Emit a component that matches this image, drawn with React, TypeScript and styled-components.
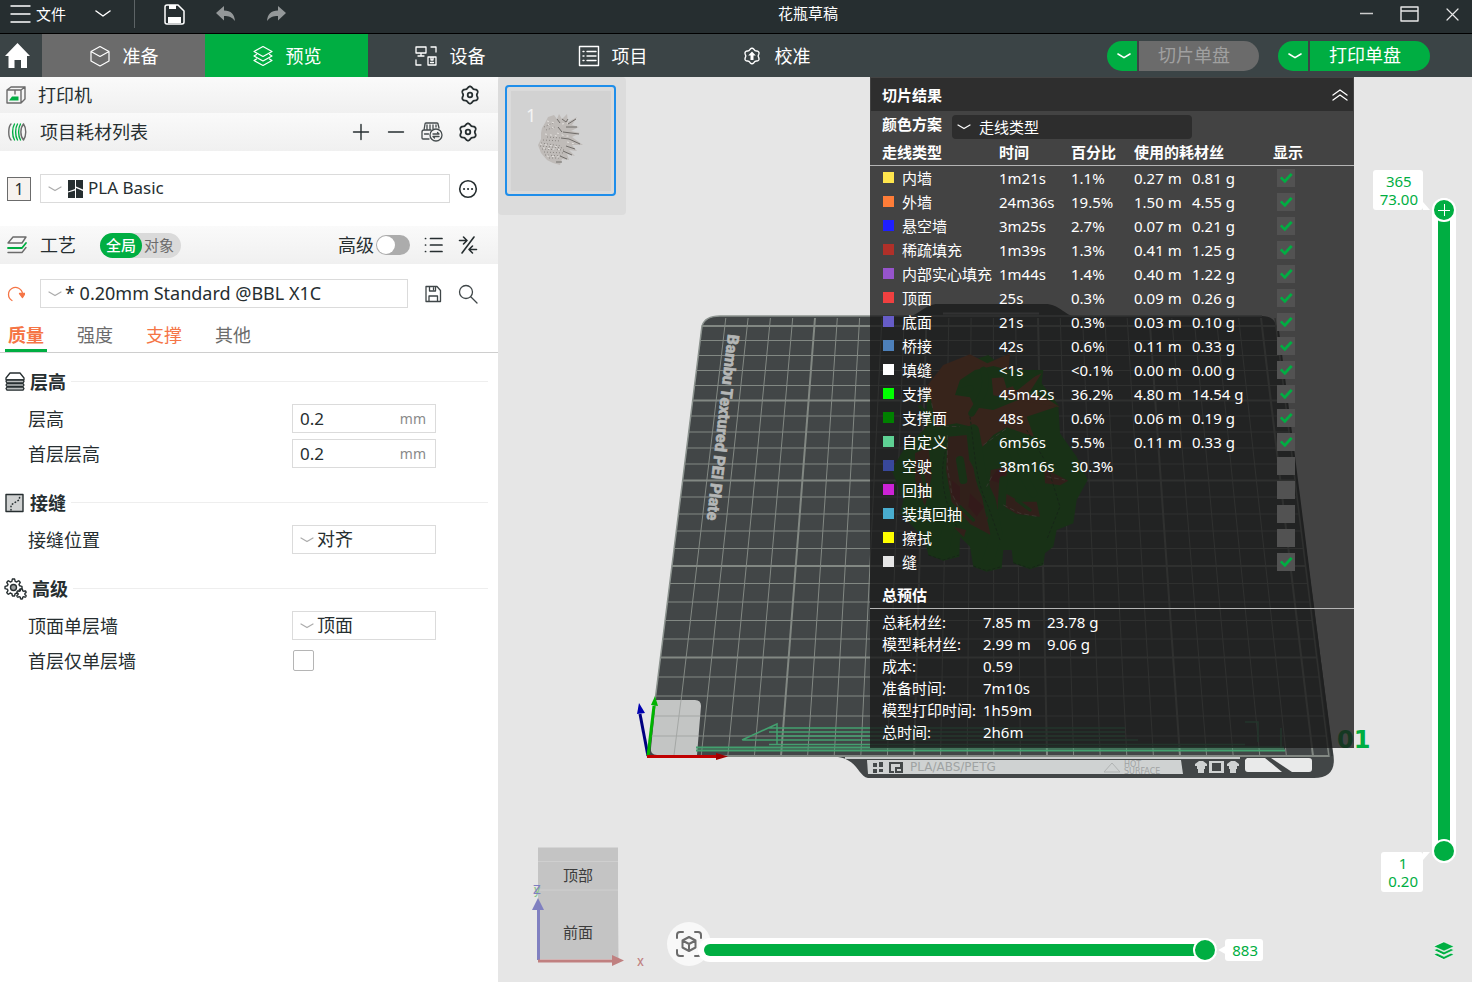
import React, { useState } from 'react';
import styled, { createGlobalStyle, css } from 'styled-components';

const green = '#00ae42';
const ink = '#262e30';

const GlobalStyle = createGlobalStyle`
  *, *::before, *::after { box-sizing: border-box; }
  body { margin: 0; background: #e6e6e6; }
  body, button, input, select {
    font-family: "Noto Sans", "Noto Sans CJK SC", sans-serif;
    color: ${ink};
  }
  button { border: 0; padding: 0; background: none; cursor: pointer; }
  svg { display: block; flex: none; }
  h2, h3 { margin: 0; }
`;

const Page = styled.div`
  display: flex;
  flex-direction: column;
  min-height: 100vh;
`;

/* ---------- title bar ---------- */

const TitleBar = styled.header`
  display: flex;
  align-items: flex-start;
  height: 34px;
  background: ${ink};
  border-bottom: 1px solid #000;
  color: #fff;
`;

const MenuGroup = styled.div`
  display: flex;
  align-items: center;
  width: 288px;
  height: 28px;
  padding-left: 10px;
`;

const FileButton = styled.button`
  display: flex;
  align-items: center;
  gap: 5px;
  color: #fff;
  font-size: 15px;
  line-height: 20px;
`;

const BarButton = styled.button<{ $left: number }>`
  margin-left: ${(p) => p.$left}px;
`;

const BarDivider = styled.span`
  width: 1px;
  height: 28px;
  margin-left: 23px;
  background: #5d6466;
`;

const DocTitle = styled.div`
  flex: 1;
  text-align: center;
  font-size: 15px;
  line-height: 26px;
`;

const WindowGroup = styled.div`
  display: flex;
  align-items: center;
  justify-content: flex-end;
  gap: 27px;
  width: 144px;
  height: 28px;
  padding-right: 13px;
`;

/* ---------- tab bar ---------- */

const TabBar = styled.nav`
  display: flex;
  align-items: center;
  height: 43px;
  background: #3b4446;
`;

const HomeButton = styled.button`
  width: 42px;
  padding-left: 5px;
`;

const MainTab = styled.button<{ $bg?: string }>`
  display: flex;
  align-items: center;
  justify-content: center;
  gap: 12px;
  width: 163px;
  height: 43px;
  background: ${(p) => p.$bg ?? 'transparent'};
  color: #fff;
  font-size: 18px;
  line-height: 24px;
`;

const Actions = styled.div`
  display: flex;
  gap: 19px;
  margin-left: auto;
  padding-right: 42px;
`;

const SplitButton = styled.div`
  display: flex;
  gap: 2px;
`;

const SplitArrow = styled.button`
  display: flex;
  align-items: center;
  justify-content: center;
  width: 30px;
  height: 30px;
  padding-left: 4px;
  border-radius: 15px 0 0 15px;
  background: ${green};
`;

const SplitMain = styled.button<{ $muted?: boolean }>`
  width: 120px;
  height: 30px;
  padding: 0 10px 2px 0;
  border-radius: 0 15px 15px 0;
  background: ${(p) => (p.$muted ? '#6b6b6b' : green)};
  color: ${(p) => (p.$muted ? '#a0a0a0' : '#fff')};
  font-size: 18px;
  line-height: 28px;
`;

/* ---------- side panel ---------- */

const Workspace = styled.div`
  display: flex;
  flex: 1;
`;

const Sidebar = styled.aside`
  flex: none;
  width: 498px;
  background: #fff;
`;

const Band = styled.div<{ $h: number; $right?: number; $gap?: number }>`
  display: flex;
  align-items: center;
  gap: ${(p) => p.$gap ?? 15}px;
  height: ${(p) => p.$h}px;
  padding: 0 ${(p) => p.$right ?? 20}px 0 6px;
  background: linear-gradient(#fafafa, #f0f0f0);
`;

const BandTitle = styled.h2`
  display: flex;
  align-items: center;
  gap: 12px;
  margin-right: auto;
  font-size: 18px;
  font-weight: 400;
  line-height: 24px;
`;

const ScopeSwitch = styled.div`
  display: flex;
  align-items: center;
  height: 25px;
  margin-left: 12px;
  padding-right: 5px;
  border-radius: 13px;
  background: #dadada;
`;

const ScopeOption = styled.button<{ $on?: boolean }>`
  height: 25px;
  padding: 0 ${(p) => (p.$on ? 6 : 2)}px;
  border-radius: 13px;
  font-size: 15px;
  line-height: 22px;
  ${(p) =>
    p.$on
      ? css`
          background: ${green};
          color: #fff;
          font-weight: 500;
        `
      : css`
          color: #6b6b6b;
        `}
`;

const SwitchLabel = styled.label`
  display: flex;
  align-items: center;
  gap: 2px;
  font-size: 18px;
  line-height: 24px;
`;

const Toggle = styled.input`
  appearance: none;
  width: 34px;
  height: 20px;
  margin: 0;
  border-radius: 10px;
  background: #acacac;
  &::after {
    content: '';
    display: block;
    width: 18px;
    height: 18px;
    margin: 1px;
    border-radius: 50%;
    background: #fff;
  }
  &:checked { background: ${green}; }
  &:checked::after { margin-left: 15px; }
`;

const PresetRow = styled.div<{ $pad: string; $gap: number }>`
  display: flex;
  align-items: center;
  gap: ${(p) => p.$gap}px;
  padding: ${(p) => p.$pad};
`;

const SlotButton = styled.button`
  width: 24px;
  height: 24px;
  margin-right: 1px;
  border: 1px solid #6b6b6b;
  background: #f6f2ef;
  font-size: 16px;
  line-height: 20px;
`;

const SelectBox = styled.div<{ $w?: number }>`
  display: flex;
  align-items: center;
  ${(p) => (p.$w ? `width: ${p.$w}px;` : 'flex: 1;')}
  height: 29px;
  padding-left: 7px;
  border: 1px solid #dbdbdb;
  background: #fff;
`;

const Select = styled.select<{ $size: number }>`
  appearance: none;
  flex: 1;
  min-width: 0;
  height: 27px;
  padding: 0 3px 2px;
  border: 0;
  background: none;
  font-size: ${(p) => p.$size}px;
`;

const Tabs = styled.div`
  display: flex;
  gap: 27px;
  padding: 12px 0 0 5px;
  border-bottom: 1px solid #cecece;
`;

const Tab = styled.button<{ $on?: boolean; $changed?: boolean }>`
  width: 42px;
  height: 32px;
  padding-top: 2px;
  border-bottom: 3px solid ${(p) => (p.$on ? green : 'transparent')};
  color: ${(p) => (p.$changed ? '#f57546' : '#6b6b6b')};
  font-size: 18px;
  font-weight: ${(p) => (p.$on ? 700 : 400)};
  line-height: 27px;
`;

const Settings = styled.div`
  display: flex;
  flex-direction: column;
  gap: 12px;
  padding: 9px 10px 0 4px;
`;

const GroupTitle = styled.h3`
  display: flex;
  align-items: center;
  gap: 5px;
  height: 39px;
  font-size: 18px;
  line-height: 24px;
  &::after {
    content: '';
    flex: 1;
    height: 1px;
    background: #eee;
  }
`;

const Field = styled.div`
  display: flex;
  align-items: center;
  height: 35px;
  padding-left: 24px;
`;

const FieldLabel = styled.label`
  width: 264px;
  font-size: 18px;
  line-height: 24px;
`;

const NumberBox = styled.div`
  display: flex;
  align-items: center;
  width: 144px;
  height: 29px;
  padding: 0 9px 0 7px;
  border: 1px solid #dbdbdb;
`;

const NumberInput = styled.input`
  flex: 1;
  min-width: 0;
  padding: 0 0 1px;
  border: 0;
  background: none;
  font-size: 17px;
  outline: none;
`;

const Unit = styled.span`
  color: #8a8a8a;
  font-size: 14px;
  line-height: 28px;
`;

const Tick = styled.input`
  appearance: none;
  width: 21px;
  height: 21px;
  margin: 0 0 0 1px;
  border: 1px solid #b5b5b5;
  border-radius: 2px;
  background: #fff;
  &:checked { background: ${green}; }
`;

/* ---------- viewport ---------- */

const Viewport = styled.main`
  position: relative;
  display: grid;
  grid-template-columns: 1fr 484px 118px;
  grid-template-rows: 1fr auto;
  flex: 1;
  background: #e6e6e6;
`;

const SceneLayer = styled.svg`
  position: absolute;
  inset: 0;
  width: 100%;
  height: 100%;
`;

const PlateStrip = styled.div`
  position: relative;
  justify-self: start;
  align-self: start;
  width: 128px;
  height: 138px;
  padding: 8px 7px;
  border-radius: 4px;
  background: #dcdcdc;
`;

const PlateCard = styled.button`
  display: flex;
  align-items: flex-start;
  width: 111px;
  height: 111px;
  padding: 4px 3px 3px 4px;
  border: 2px solid #1f8eea;
  border-radius: 4px;
  background: #dadada;
`;

const PlateImage = styled.svg`
  background: #d2d2d2;
`;

const Results = styled.section`
  position: relative;
  align-self: start;
  padding: 1px 0 5px;
  background: rgba(26, 26, 26, 0.8);
  color: #fff;
  font-size: 15px;
  line-height: 22px;
`;

const ResultsHead = styled.div`
  display: flex;
  align-items: center;
  justify-content: space-between;
  height: 33px;
  margin: 0 1px;
  padding: 0 4px 0 11px;
  background: #2e2e2e;
`;

const ResultsTitle = styled.h2`
  font-size: 15px;
  line-height: 22px;
`;

const SchemeRow = styled.div`
  display: flex;
  align-items: flex-start;
  gap: 10px;
  padding: 4px 0 0 12px;
`;

const SchemeLabel = styled.label`
  font-weight: 700;
  line-height: 18px;
`;

const SchemeBox = styled.div`
  display: flex;
  align-items: center;
  width: 240px;
  height: 24px;
  padding-left: 5px;
  border-radius: 4px;
  background: #2d2d2d;
`;

const SchemeSelect = styled.select`
  appearance: none;
  flex: 1;
  height: 24px;
  padding: 0 8px;
  border: 0;
  background: none;
  color: #fff;
  font-size: 15px;
`;

const LineTable = styled.table`
  width: 100%;
  table-layout: fixed;
  border-spacing: 0;
  th {
    height: 27px;
    padding: 0;
    border-bottom: 1px solid #b4b4b4;
    text-align: left;
    line-height: 26px;
  }
  td {
    height: 24px;
    padding: 0;
    line-height: 24px;
    white-space: nowrap;
  }
  th:first-child, td:first-child { padding-left: 12px; }
`;

const Swatch = styled.span<{ $c: string }>`
  width: 11px;
  height: 11px;
  margin: 0 8px 2px 1px;
  background: ${(p) => p.$c};
`;

const LineName = styled.span`
  display: flex;
  align-items: center;
`;

const ShowTick = styled.input`
  appearance: none;
  display: grid;
  place-items: center;
  width: 18px;
  height: 18px;
  margin: 0 0 0 4px;
  background: #525252;
  &:checked::after {
    content: '';
    width: 14px;
    height: 12px;
    background: ${green};
    clip-path: polygon(6% 52%, 20% 38%, 40% 62%, 82% 8%, 98% 22%, 42% 94%);
  }
`;

const TotalsTitle = styled.h3`
  padding: 9px 0 1px 12px;
  border-bottom: 1px solid #b4b4b4;
  font-size: 15px;
  line-height: 24px;
`;

const Totals = styled.dl`
  display: grid;
  grid-template-columns: 101px 64px 1fr;
  margin: 0;
  padding: 2px 0 0 12px;
  line-height: 22px;
  white-space: nowrap;
  dt { grid-column: 1; }
  dd { margin: 0; }
`;

/* ---------- sliders ---------- */

const Rail = styled.div`
  position: relative;
  display: flex;
  flex-direction: column;
  align-items: flex-end;
  grid-column: 3;
  grid-row: 1 / 3;
  padding: 93px 16px 21px 0;
`;

const RailBody = styled.div`
  display: flex;
  flex: 1;
  gap: 9px;
`;

const RailLabels = styled.div`
  display: flex;
  flex-direction: column;
  justify-content: space-between;
  align-items: flex-end;
`;

const Bubble = styled.output<{ $tail: string }>`
  position: relative;
  padding: 2px 5px 2px 7px;
  border-radius: 3px;
  background: #fff;
  color: ${green};
  font-size: 15px;
  line-height: 18px;
  text-align: center;
  &::after {
    content: '';
    position: absolute;
    width: 7px;
    height: 8px;
    background: #fff;
    ${(p) =>
      p.$tail === 'top' && 'left: 100%; top: 0; clip-path: polygon(0 0, 100% 0, 0 100%);'}
    ${(p) =>
      p.$tail === 'bottom' && 'left: 100%; bottom: 0; clip-path: polygon(0 0, 100% 100%, 0 100%);'}
    ${(p) =>
      p.$tail === 'left' && 'right: 100%; top: 7px; clip-path: polygon(0 50%, 100% 0, 100% 100%);'}
  }
`;

const VerticalPill = styled.div`
  display: grid;
  width: 24px;
  margin: 28px 0 29px;
  border-radius: 12px;
  background: #fff;
`;

const VerticalFill = styled.span`
  grid-area: 1 / 1;
  width: 12px;
  margin: 12px 6px;
  background: ${green};
`;

const thumb = css`
  appearance: none;
  width: 24px;
  height: 24px;
  border: 2px solid #fff;
  border-radius: 50%;
  background-color: ${green};
`;

const VerticalRange = styled.input<{ $plus?: boolean }>`
  grid-area: 1 / 1;
  appearance: none;
  writing-mode: vertical-lr;
  direction: rtl;
  width: 24px;
  height: 100%;
  margin: 0;
  background: none;
  pointer-events: none;
  &::-webkit-slider-thumb {
    ${thumb}
    pointer-events: auto;
    ${(p) =>
      p.$plus &&
      css`
        background-image: linear-gradient(#fff, #fff), linear-gradient(#fff, #fff);
        background-size: 12px 1px, 1px 12px;
        background-position: center;
        background-repeat: no-repeat;
      `}
  }
`;

const LayersButton = styled.button`
  margin: 49px 2px 0 0;
`;

const BottomBar = styled.div`
  position: relative;
  display: flex;
  align-items: flex-start;
  grid-column: 1 / 3;
  grid-row: 2;
  height: 135px;
  padding: 0 91px 0 32px;
`;

const FitButton = styled.button`
  display: grid;
  place-items: center;
  flex: none;
  width: 44px;
  height: 44px;
  margin: 75px 0 0 17px;
  border-radius: 50%;
  background: #f8f8f8;
`;

const HorizontalPill = styled.div`
  position: relative;
  flex: 1;
  height: 24px;
  margin: 91px 8px 0 -13px;
  padding-left: 6px;
  border-radius: 12px;
  background: #fff;
`;

const HorizontalRange = styled.input`
  appearance: none;
  display: block;
  width: 100%;
  height: 24px;
  margin: 0;
  background: none;
  &::-webkit-slider-runnable-track {
    height: 12px;
    border-radius: 6px;
    background: ${green};
  }
  &::-webkit-slider-thumb {
    ${thumb}
    margin-top: -6px;
  }
`;

const MoveBubble = styled.div`
  display: flex;
  margin-top: 92px;
`;

/* ---------- icons ---------- */

const wave = (cx: number, cy: number, r: number, amp: number, lobes: number, square = 1) => {
  const pts: string[] = [];
  for (let i = 0; i < 96; i++) {
    const t = (i / 96) * Math.PI * 2 - Math.PI / 2;
    const w = Math.max(-1, Math.min(1, Math.cos(lobes * (t + Math.PI / 2)) * square));
    const rr = r + amp * w;
    pts.push(`${(cx + rr * Math.cos(t)).toFixed(2)} ${(cy + rr * Math.sin(t)).toFixed(2)}`);
  }
  return `M${pts.join('L')}Z`;
};

type IconProps = { w?: number; h?: number; box?: string; color?: string; sw?: number; children: React.ReactNode };
const Icon = ({ w = 20, h, box, color = ink, sw = 1.4, children }: IconProps) => (
  <svg
    width={w}
    height={h ?? w}
    viewBox={box ?? `0 0 ${w} ${h ?? w}`}
    fill="none"
    stroke={color}
    strokeWidth={sw}
    strokeLinecap="round"
    strokeLinejoin="round"
    aria-hidden="true"
  >
    {children}
  </svg>
);

const Chevron = ({ color = '#acacac', sw = 1.2 }: { color?: string; sw?: number }) => (
  <Icon w={14} h={8} color={color} sw={sw}>
    <path d="M1 2l6 3.6L13 2" />
  </Icon>
);

const Gear = () => (
  <Icon sw={1.8}>
    <path d={wave(10, 10, 7.7, 0.9, 6)} />
    <circle cx="10" cy="10" r="2.3" />
  </Icon>
);

/* ---------- data ---------- */

const lines: [string, string, string, string, string, string, boolean][] = [
  ['#ffe64d', '内墙', '1m21s', '1.1%', '0.27 m', '0.81 g', true],
  ['#ff7d38', '外墙', '24m36s', '19.5%', '1.50 m', '4.55 g', true],
  ['#1f1fff', '悬空墙', '3m25s', '2.7%', '0.07 m', '0.21 g', true],
  ['#b03029', '稀疏填充', '1m39s', '1.3%', '0.41 m', '1.25 g', true],
  ['#9654cc', '内部实心填充', '1m44s', '1.4%', '0.40 m', '1.22 g', true],
  ['#f04040', '顶面', '25s', '0.3%', '0.09 m', '0.26 g', true],
  ['#665cc7', '底面', '21s', '0.3%', '0.03 m', '0.10 g', true],
  ['#4d80ba', '桥接', '42s', '0.6%', '0.11 m', '0.33 g', true],
  ['#ffffff', '填缝', '<1s', '<0.1%', '0.00 m', '0.00 g', true],
  ['#00ff00', '支撑', '45m42s', '36.2%', '4.80 m', '14.54 g', true],
  ['#008000', '支撑面', '48s', '0.6%', '0.06 m', '0.19 g', true],
  ['#5ed194', '自定义', '6m56s', '5.5%', '0.11 m', '0.33 g', true],
  ['#38489b', '空驶', '38m16s', '30.3%', '', '', false],
  ['#cd22d6', '回抽', '', '', '', '', false],
  ['#49adcf', '装填回抽', '', '', '', '', false],
  ['#ffff00', '擦拭', '', '', '', '', false],
  ['#e6e6e6', '缝', '', '', '', '', true],
];

const totals = [
  ['总耗材丝:', '7.85 m', '23.78 g'],
  ['模型耗材丝:', '2.99 m', '9.06 g'],
  ['成本:', '0.59', ''],
  ['准备时间:', '7m10s', ''],
  ['模型打印时间:', '1h59m', ''],
  ['总时间:', '2h6m', ''],
];

/* ---------- scene ---------- */

const rowYs = [
  756, 736, 716, 696, 677, 657.5, 639, 620.5, 602, 583.5, 566, 548.5, 531, 514, 497, 480.5, 464, 448, 432, 416,
  400.5, 385.5, 370.5, 355.5, 340.5, 326,
];
const leftAt = (y: number) => 648 + ((756 - y) / 439) * 55;
const rightAt = (y: number) => 1329 - ((756 - y) / 439) * 55;

const HedgehogModel = () => (
  <g transform="translate(860 320) scale(.3333)">
    <path
      fill="#0f8c08"
      d="M200 210L250 150L310 130L385 105L440 150L550 150L545 190L595 255L600 340L650 410L683 480L650 540L640 610L590 630L580 680L555 700L550 735L510 748L460 730L455 690L430 690L425 745L380 755L340 740L330 680L300 650L298 710L250 722L205 705L195 660L150 610L120 580L130 540L95 450L130 390L200 320Z"
    />
    <path
      fill="#a84a20"
      d="M250 135L330 103L382 130L450 100L446 150L400 138L345 150L300 180L285 225L330 232L345 262L400 270L480 238L590 260L500 290L522 350L440 322L400 345L368 380L335 320L290 310L228 320L213 240L196 205Z"
    />
    <path fill="#a84a20" d="M545 160L505 222L555 232L600 262L470 240L400 226L395 175L430 172L440 205L470 195Z" />
    <path
      fill="#8c381c"
      d="M165 400L205 380L215 470L195 560L165 480ZM265 350L320 345L328 420L355 470L372 560L392 645L330 612L275 545L258 450ZM392 450L445 440L428 515L480 545L530 545L540 590L470 582L425 555L380 600L388 500ZM552 445L625 482L600 496L555 490ZM280 620L318 630L312 652Z"
    />
    <path fill="#981c1c" d="M410 450L440 455L420 490L390 480ZM330 520L372 560L350 590L325 560ZM275 480L300 500L300 550L278 530Z" />
    <g fill="none" stroke="#0f8c08" strokeLinecap="round">
      <path strokeWidth="34" d="M240 360C220 440 240 520 270 600L250 690M340 330C360 420 350 470 390 540L410 640L385 720" />
      <path strokeWidth="20" d="M370 150C390 200 360 240 335 280M520 160L470 200M300 215L330 205" />
      <path strokeWidth="24" d="M450 370L480 450L520 520M300 420L310 480M430 480L425 560" />
      <path strokeWidth="10" d="M470 540L510 570M300 560L340 600M180 430L200 520M180 260L220 300" />
    </g>
    <g fill="none" stroke="#085206" strokeWidth="3" strokeDasharray="9 6">
      <path d="M330 290C345 400 345 480 385 560L420 660M260 380C235 460 250 540 290 620M500 330L560 430L600 560L560 660" />
      <path d="M205 705L250 720L298 705M340 738L380 752L425 740M460 728L510 745L550 730" />
    </g>
    <g fill="none" stroke="#d9b8a6" strokeWidth="2" strokeDasharray="14 9">
      <path d="M262 345L262 440L275 520L300 570M430 555L480 580L535 590M395 470L380 500M560 470L615 480" />
      <path d="M215 250L230 318L300 320M370 375L440 325" />
    </g>
  </g>
);

const Scene = () => (
  <SceneLayer viewBox="498 77 974 905" preserveAspectRatio="xMidYMid meet" role="img" aria-label="打印板">
    <path d="M905 318C922 314 924 304 938 304H1045C1060 304 1062 314 1078 318Z" fill="#424647" />
    <path d="M943 313.500H1039" stroke="#8f9394" strokeWidth="2" />
    <path
      d="M648 757L702 326Q705 316 720 316H1262Q1275 316 1277 328L1333 752Q1338 778 1314 778H868C858 776 858 760 838 757Z"
      fill="#424647"
    />
    <path d="M1278 330L1332 756" stroke="#35393a" strokeWidth="2" />
    <path d="M648 757L702 326Q705 316 720 316H1262" fill="none" stroke="#8c938f" strokeWidth="1.5" />
    <g fill="none" stroke="#828883">
      {Array.from({ length: 25 }, (_, k) => k + 1).map((i) => (
        <path
          key={i}
          strokeWidth={i % 5 ? 1 : 2}
          d={`M${(648 + 26.6 * i).toFixed(1)} 756L${(703.5 + 22.3 * i).toFixed(1)} 318`}
        />
      ))}
      {rowYs.map((y, i) => (
        <path key={y} strokeWidth={i % 5 ? 1.2 : 2} d={`M${leftAt(y).toFixed(1)} ${y}H${rightAt(y).toFixed(1)}`} />
      ))}
      <path strokeWidth="1.500" d="M1329 757L1275 318" />
    </g>
    <path d="M656 700H695Q701 700 701 706L697 755H657Q650 755 651 748Z" fill="#c3c5c4" />
    <path d="M681 700L674 755M653 716H700M651 736H698" stroke="#a4a7a5" fill="none" />
    <text
      transform="translate(728 334) rotate(96.500)"
      fontFamily="Roboto, sans-serif"
      fontWeight="700"
      fontSize="16"
      fill="#b4b6b6"
      stroke="#b4b6b6"
      strokeWidth=".7"
    >
      Bambu Textured PEI Plate
    </text>
    <HedgehogModel />
    <g stroke="#43a06f" fill="none" strokeWidth="1.500">
      <path d="M769 728H1125M769 732H1125M776 736H1125M743 740H1138M769 744.500H1245M742 740L777 724V745M1245 722h13v20M1281 728v20" />
      <path strokeWidth="2" d="M696 747.500H1284M696 750.500H1285" />
    </g>
    <path d="M845 758H1240" stroke="#c9cccc" strokeWidth="2" />
    <path d="M867 760H1181L1183 774H868Z" fill="#cfd2d2" />
    <g fill="#44494a">
      <path d="M873 763h4v4h-4zM879 762h4v5h-4zM873 769h4v4h-4zM879 769h4v3h-4z" />
      <path fillRule="evenodd" d="M889 762h14v5h-3v-3h-9v7h3v2h-5zM895 767h8v6h-8zM897 769v2h4v-2z" />
    </g>
    <text x="910" y="771" fontFamily="DejaVu Sans, sans-serif" fontSize="12" fill="#9fa3a3">
      PLA/ABS/PETG
    </text>
    <path d="M1104 772l8-9 8 9z" fill="none" stroke="#b0b3b3" />
    <text fontFamily="DejaVu Sans, sans-serif" fontSize="8" fill="#9fa3a3">
      <tspan x="1124" y="767">HOT</tspan>
      <tspan x="1124" y="774">SURFACE</tspan>
    </text>
    <g fill="#cfd2d2">
      <path d="M1195 764l4-3h4l4 3v2h-2v3h-1v4h-6v-4h-1v-3h-2zM1227 764l4-3h4l4 3v2h-2v3h-1v4h-6v-4h-1v-3h-2z" />
      <path fillRule="evenodd" d="M1209 761h15v12h-15zM1212 763v8h9v-8z" />
    </g>
    <path d="M1247 758H1265L1282 772H1248Q1245 772 1245 769V760ZM1271 758H1309Q1312 758 1312 761V769Q1312 772 1309 772H1292Z" fill="#e9eaea" />
    <text x="1337" y="748" fontFamily="DejaVu Sans, sans-serif" fontWeight="700" fontSize="24" fill={green}>
      01
    </text>
    <g strokeWidth="3" fill="none">
      <path d="M648 756L640 714" stroke="#000080" />
      <path d="M648 756L654 706" stroke="#00b400" />
      <path d="M647 756.500H716" stroke="#c00000" />
    </g>
    <path d="M639 703L645 713L637 714Z" fill="#0000b0" />
    <path d="M655 696L658 706L651 705Z" fill="#00b400" />
    <path d="M716 753V760L728 756.500Z" fill="#a00000" />
  </SceneLayer>
);

const PlateThumbnail = () => (
  <PlateImage width="100" height="100" viewBox="0 0 100 100" role="img" aria-label="盘 1">
    <path
      d="M31 37L34 32L37 26L43 24L46 28L48 23L51 28L56 23L57 31L66 26L61 34L68 36L60 40L69 42L61 46L72 54L61 54L66 60L58 59L64 65L56 63L58 69L51 68L49 74L42 72L36 69L30 62L27 54L30 48L30 42Z"
      fill="#bfbbb8"
    />
    <g fill="none" strokeWidth="1">
      <path stroke="#6f6c69" d="M46 28l3 4M51 28l4 3 2-3M57 33l8-5M55 36l11 0M52 41l8 1 8 1M58 48l11 5M50 47l8 1M55 55l9 3M52 60l9 4M49 65l7 3M45 71l6 0M47 36l4 5" />
      <path
        stroke="#8b8783"
        strokeDasharray="1 2"
        d="M30 52l20 3M29 55l24 2M31 58l22 1M33 61l20 1M34 64l16 1M32 49l18 1M36 46l14 1M38 67l12 0M33 36l11-5M35 39l9-3"
      />
      <path stroke="#e4e1de" strokeDasharray="2 3" d="M29 53l20 3M32 57l20 2M36 65l12 1M36 30l8 2M46 42l8 3 6 0M34 43l12 2M51 33l6-1M37 33l8 6M56 51l8 2" />
    </g>
    <text x="15" y="31" fontFamily="Noto Sans, sans-serif" fontSize="18" fill="#f4f4f4">
      1
    </text>
  </PlateImage>
);

const ViewCube = () => (
  <svg width="120" height="125" viewBox="530 847 120 125" role="img" aria-label="视角">
    <path d="M538 847.500H618V903L618.500 959H538Z" fill="#c4c4c4" />
    <path d="M538 861.500H618M538 890H618" stroke="#cfcfcf" />
    <g fontFamily="'Noto Sans CJK SC', sans-serif" fontSize="15" fill="#3c3c3c">
      <text x="563" y="881">顶部</text>
      <text x="563" y="938">前面</text>
    </g>
    <text x="534" y="894" fontFamily="Roboto, sans-serif" fontSize="13" fill="#86c386">y</text>
    <text x="533" y="894" fontFamily="Roboto, sans-serif" fontSize="13" fill="#8080c0">Z</text>
    <text x="637" y="966" fontFamily="Roboto, sans-serif" fontSize="14" fill="#c08080">x</text>
    <path d="M538.500 960V908" stroke="#8080c0" strokeWidth="3" />
    <path d="M532 910L538 898L544 910Z" fill="#8080c0" />
    <path d="M538 961H613" stroke="#c08080" strokeWidth="3" />
    <path d="M612 955V966L624 960.500Z" fill="#c08080" />
  </svg>
);

/* ---------- app ---------- */

const Header = () => (
  <>
    <TitleBar>
      <MenuGroup>
        <FileButton>
          <Icon w={21} h={18} color="#fff" sw={1.4}><path d="M1 1h19M1 9h19M1 17h19" /></Icon>
          文件
        </FileButton>
        <BarButton $left={29} aria-label="更多">
          <Icon w={16} h={8} color="#fff" sw={1.5}><path d="M1 1l7 5 7-5" /></Icon>
        </BarButton>
        <BarDivider />
        <BarButton $left={29} aria-label="保存">
          <Icon w={21} h={21} color="#fff" sw={1.5}>
            <path d="M1 3a2 2 0 0 1 2-2h11l6 6v11a2 2 0 0 1-2 2H3a2 2 0 0 1-2-2z" />
            <path d="M5 1h7v4H5zM4 13h13v6H4z" fill="#fff" stroke="none" />
          </Icon>
        </BarButton>
        <BarButton $left={30} aria-label="撤销">
          <Icon w={21} h={18} color="none"><path fill="#949899" d="M9 1v4.500c7 0 10.500 4 11 10.500-3-4-6-5-11-5v4.500L1 8z" /></Icon>
        </BarButton>
        <BarButton $left={30} aria-label="重做">
          <Icon w={21} h={18} color="none"><path fill="#949899" d="M12 1v4.500C5 5.500 1.500 9.500 1 16c3-4 6-5 11-5v4.500L20 8z" /></Icon>
        </BarButton>
      </MenuGroup>
      <DocTitle>花瓶草稿</DocTitle>
      <WindowGroup>
        <button aria-label="最小化"><Icon w={13} h={20} color="#ccc"><path d="M0 9.500h13" /></Icon></button>
        <button aria-label="最大化">
          <Icon w={19} h={16} color="#e8e8e8"><path d="M1 1h17v14H1zM1 5h17" /></Icon>
        </button>
        <button aria-label="关闭"><Icon w={13} color="#e8e8e8" sw={1.2}><path d="M1 1l11 11M12 1L1 12" /></Icon></button>
      </WindowGroup>
    </TitleBar>
    <TabBar>
      <HomeButton aria-label="首页">
        <Icon w={26} h={28} color="none">
          <path fill="#fff" d="M12.500 1L25 14h-3v12h-6v-8H9.500v8H3.500V14H0z" />
        </Icon>
      </HomeButton>
      <MainTab $bg="#6b6b6b">
        <Icon w={22} color="#fff" sw={1.2}>
          <path d="M11 1.500l9 5v9.500l-9 5-9-5V6.500zM2 6.500l9 5 9-5" />
        </Icon>
        准备
      </MainTab>
      <MainTab $bg={green}>
        <Icon w={22} color="#fff" sw={1.2}>
          <path d="M11 1.500l9 5-9 5-9-5zM4.500 9.500L2 11l9 5 9-5-2.500-1.500M4.500 14L2 15.500l9 5 9-5-2.500-1.500" />
        </Icon>
        预览
      </MainTab>
      <MainTab>
        <Icon w={24} h={22} box="0 0 24 22" color="#fff" sw={1.3}>
          <path d="M2 2h10v6H2zM7 8v3M4 11h6M17 2h5v5M2 15v5h5M14 12h8v8h-8zM17 12v3h2v-3M16.500 17.500h3" />
        </Icon>
        设备
      </MainTab>
      <MainTab>
        <Icon w={22} color="#fff" sw={1.4}>
          <path d="M1.500 1.500h19v19h-19z" />
          <path d="M5 6.500h1M9 6.500h9M5 11h1M9 11h9M5 15.500h1M9 15.500h9" />
        </Icon>
        项目
      </MainTab>
      <MainTab>
        <Icon w={22} color="#fff" sw={1.4}>
          <path d={wave(11, 11, 7, 0.8, 6)} />
          <path fill="#fff" stroke="none" d="M11 6.500l3.800 4h-2.300v4.500h-3v-4.500H7.200z" />
        </Icon>
        校准
      </MainTab>
      <Actions>
        <SplitButton>
          <SplitArrow aria-label="切片选项"><Chevron color="#fff" sw={1.6} /></SplitArrow>
          <SplitMain $muted>切片单盘</SplitMain>
        </SplitButton>
        <SplitButton>
          <SplitArrow aria-label="打印选项"><Chevron color="#fff" sw={1.6} /></SplitArrow>
          <SplitMain>打印单盘</SplitMain>
        </SplitButton>
      </Actions>
    </TabBar>
  </>
);

const SidePanel = () => (
  <Sidebar>
    <Band $h={36} $right={18}>
      <BandTitle>
        <Icon color="#6b6b6b" sw={1.4}>
          <path d="M1 5l4-3h14v12l-4 4H1zM1 5h14v13M15 5l4-3M9 5v4" />
          <path d="M3 15.500l3-4h6.500v4z" fill={green} stroke="none" />
        </Icon>
        打印机
      </BandTitle>
      <button aria-label="打印机设置"><Gear /></button>
    </Band>
    <Band $h={38}>
      <BandTitle>
        <Icon w={22} h={20} sw={1.4} color={green}>
          <path stroke="#6b6b6b" d="M5 2C2 5 2 15 5 18M17.500 2c-3.500 4-3.500 12 0 16c3-4 3-12 0-16" />
          <path d="M8.500 2c-2.500 4-2.500 12 0 16M11.500 2c-2.500 4-2.500 12 0 16M14.500 2c-2.500 4-2.500 12 0 16" />
        </Icon>
        项目耗材列表
      </BandTitle>
      <button aria-label="添加耗材"><Icon><path d="M2.500 10h15M10 2.500v15" /></Icon></button>
      <button aria-label="删除耗材"><Icon><path d="M2.500 10h15" /></Icon></button>
      <button aria-label="同步耗材">
        <Icon w={22} h={20} sw={1.3} color="#444b4d">
          <path d="M3 8l1-6q0-1 1-1h11q1 0 1 1l1 4M6 3v5M9 3v5M12 3v4M15 3v2M3 8h7M8 17H2q-1 0-1-1v-6q0-2 2-2M3.500 12h4" />
          <circle cx="15" cy="13" r="6" />
          <path d="M12 12h6l-1.500-1.500M18 14.500h-6l1.500 1.500" />
        </Icon>
      </button>
      <button aria-label="耗材设置"><Gear /></button>
    </Band>
    <PresetRow $pad="23px 20px 23px 7px" $gap={8}>
      <SlotButton>1</SlotButton>
      <SelectBox>
        <Chevron />
        <Icon w={23} h={20} color="none">
          <path fill={ink} d="M6 1h7v9l-7 2.500zM14 1h7v9.500L14 7.500zM6 13.500L13 11.500V19H6zM14 9l7 3v7h-7z" />
        </Icon>
        <Select $size={17} aria-label="耗材">
          <option>PLA Basic</option>
        </Select>
      </SelectBox>
      <button aria-label="更多">
        <Icon sw={1.6}>
          <circle cx="10" cy="10" r="8.300" />
          <path strokeWidth="2" d="M6 10h.1M10 10h.1M14 10h.1" />
        </Icon>
      </button>
    </PresetRow>
    <Band $h={38} $gap={14}>
      <BandTitle>
        <Icon w={22} h={20} color="#6b6b6b" sw={1.4}>
          <path d="M7 2h13l-4 6H2zM2 17.500h14l4-5" />
          <path stroke={green} strokeWidth="1.800" d="M2 13h14l4-5" />
        </Icon>
        工艺
        <ScopeSwitch>
          <ScopeOption $on>全局</ScopeOption>
          <ScopeOption>对象</ScopeOption>
        </ScopeSwitch>
      </BandTitle>
      <SwitchLabel>
        高级
        <Toggle type="checkbox" role="switch" />
      </SwitchLabel>
      <button aria-label="参数列表">
        <Icon sw={1.7}><path d="M1.500 3.500h.1M6.500 3.500H18M1.500 10h.1M6.500 10H18M1.500 16.500h.1M6.500 16.500H18" /></Icon>
      </button>
      <button aria-label="比较预设">
        <Icon sw={1.6}><path d="M1.500 5.500H9M5.500 2L9 5.500 5.500 9M16 2L4 18M18.500 14.500H11M14.500 11L11 14.500l3.500 3.500" /></Icon>
      </button>
    </Band>
    <PresetRow $pad="15px 20px 0 7px" $gap={15}>
      <button aria-label="重置">
        <Icon w={18} h={18} color="#f57546" sw={1.3}>
          <path d="M5 15.500A7 7 0 1 1 15.500 9" />
          <path d="M12.500 8.500l3 4 2.500-4z" fill="#f57546" />
        </Icon>
      </button>
      <SelectBox>
        <Chevron />
        <Select $size={18} aria-label="工艺预设">
          <option>* 0.20mm Standard @BBL X1C</option>
        </Select>
      </SelectBox>
      <button aria-label="保存预设">
        <Icon sw={1.3} color="#3f4648"><path d="M3 2.500h11l3.500 4v11H3zM6.500 2.500v4.500h6V2.500M6 17.500v-5.500h8.500v5.500M10.500 4v1.500" /></Icon>
      </button>
      <button aria-label="搜索">
        <Icon sw={1.3} color="#3f4648"><circle cx="8" cy="8" r="6.500" /><path d="M13 13l6 6" /></Icon>
      </button>
    </PresetRow>
    <Tabs>
      <Tab $on $changed>质量</Tab>
      <Tab>强度</Tab>
      <Tab $changed>支撑</Tab>
      <Tab>其他</Tab>
    </Tabs>
    <Settings>
      <section>
        <GroupTitle>
          <Icon w={21} h={20} sw={1.3}>
            <path d="M6 1h10l4 5v2H2V6z" />
            <path fill="#b9bcbc" d="M3 8h16l1 1.500-1 1.500H3L2 9.500zM3 11.500h16l1 1.500-1 1.500H3L2 13zM3 15h16l1 1.500-1 1.700H3l-1-1.700z" />
          </Icon>
          层高
        </GroupTitle>
        <Field>
          <FieldLabel htmlFor="lh">层高</FieldLabel>
          <NumberBox><NumberInput id="lh" defaultValue="0.2" /><Unit>mm</Unit></NumberBox>
        </Field>
        <Field>
          <FieldLabel htmlFor="flh">首层层高</FieldLabel>
          <NumberBox><NumberInput id="flh" defaultValue="0.2" /><Unit>mm</Unit></NumberBox>
        </Field>
      </section>
      <section>
        <GroupTitle>
          <Icon w={21} h={20} sw={1.4}>
            <path fill="#cfd1d1" d="M2 1.500h17v17H2z" />
            <path strokeDasharray=".5 2.800" strokeWidth="1.500" d="M7 17V12l8-5 1-4.500" />
          </Icon>
          接缝
        </GroupTitle>
        <Field>
          <FieldLabel htmlFor="seam">接缝位置</FieldLabel>
          <SelectBox $w={144}>
            <Chevron />
            <Select $size={18} id="seam"><option>对齐</option></Select>
          </SelectBox>
        </Field>
      </section>
      <section>
        <GroupTitle>
          <Icon w={23} h={22} sw={1.4}>
            <path d={wave(9.5, 9.5, 7.4, 1.1, 8, 2)} />
            <circle cx="9.500" cy="9.500" r="3" fill="#9a9e9e" />
            <path fill="#fff" d={wave(17.5, 16, 4.2, 0.8, 6, 2)} />
          </Icon>
          高级
        </GroupTitle>
        <Field>
          <FieldLabel htmlFor="top">顶面单层墙</FieldLabel>
          <SelectBox $w={144}>
            <Chevron />
            <Select $size={18} id="top"><option>顶面</option></Select>
          </SelectBox>
        </Field>
        <Field>
          <FieldLabel htmlFor="first">首层仅单层墙</FieldLabel>
          <Tick type="checkbox" id="first" />
        </Field>
      </section>
    </Settings>
  </Sidebar>
);

const ResultsPanel = () => (
  <Results>
    <ResultsHead>
      <ResultsTitle>切片结果</ResultsTitle>
      <button aria-label="收起">
        <Icon w={18} h={14} color="#fff" sw={1.3}><path d="M2 7l7-5 7 5M2 12l7-5 7 5" /></Icon>
      </button>
    </ResultsHead>
    <SchemeRow>
      <SchemeLabel htmlFor="scheme">颜色方案</SchemeLabel>
      <SchemeBox>
        <Chevron color="#fff" />
        <SchemeSelect id="scheme"><option>走线类型</option></SchemeSelect>
      </SchemeBox>
    </SchemeRow>
    <LineTable>
      <colgroup>
        <col style={{ width: 129 }} />
        <col style={{ width: 72 }} />
        <col style={{ width: 63 }} />
        <col style={{ width: 58 }} />
        <col style={{ width: 81 }} />
        <col />
      </colgroup>
      <thead>
        <tr>
          <th>走线类型</th>
          <th>时间</th>
          <th>百分比</th>
          <th colSpan={2}>使用的耗材丝</th>
          <th>显示</th>
        </tr>
      </thead>
      <tbody>
        {lines.map(([c, name, time, pct, m, g, shown]) => (
          <tr key={name}>
            <td><LineName><Swatch $c={c} />{name}</LineName></td>
            <td>{time}</td>
            <td>{pct}</td>
            <td>{m}</td>
            <td>{g}</td>
            <td><ShowTick type="checkbox" defaultChecked={shown} aria-label={name} /></td>
          </tr>
        ))}
      </tbody>
    </LineTable>
    <TotalsTitle>总预估</TotalsTitle>
    <Totals>
      {totals.map(([k, a, b]) => (
        <React.Fragment key={k}>
          <dt>{k}</dt>
          <dd>{a}</dd>
          <dd>{b}</dd>
        </React.Fragment>
      ))}
    </Totals>
  </Results>
);

export default function App() {
  const [top, setTop] = useState(365);
  const [bottom, setBottom] = useState(1);
  const [move, setMove] = useState(883);
  return (
    <Page>
      <GlobalStyle />
      <Header />
      <Workspace>
        <SidePanel />
        <Viewport>
          <Scene />
          <PlateStrip>
            <PlateCard aria-label="盘 1"><PlateThumbnail /></PlateCard>
          </PlateStrip>
          <ResultsPanel />
          <Rail>
            <RailBody>
              <RailLabels>
                <Bubble $tail="bottom">{top}<br />{(top / 5).toFixed(2)}</Bubble>
                <Bubble $tail="top">{bottom}<br />{(bottom / 5).toFixed(2)}</Bubble>
              </RailLabels>
              <VerticalPill>
                <VerticalFill />
                <VerticalRange type="range" min={1} max={365} value={bottom} aria-label="起始层"
                  onChange={(e) => setBottom(+e.target.value)} />
                <VerticalRange $plus type="range" min={1} max={365} value={top} aria-label="结束层"
                  onChange={(e) => setTop(+e.target.value)} />
              </VerticalPill>
            </RailBody>
            <LayersButton aria-label="图层">
              <Icon w={20} color="#fff" sw={0.5}>
                <g fill={green}>
                  <path d="M10 1l10 4.500L10 10 0 5.500z" />
                  <path d="M0 9l3-1.300L10 11l7-3.300L20 9l-10 4.800z" />
                  <path d="M0 13.500l3-1.300 7 3.300 7-3.300 3 1.300-10 4.800z" />
                </g>
              </Icon>
            </LayersButton>
          </Rail>
          <BottomBar>
            <ViewCube />
            <FitButton aria-label="适应视图">
              <Icon w={28} color="#6b6b6b" sw={2}>
                <path d="M2 8V5q0-3 3-3h3M20 2h3q3 0 3 3v3M26 20v3q0 3-3 3h-3M8 26H5q-3 0-3-3v-3" />
                <path d="M14 7l6.500 3.500v7L14 21l-6.500-3.500v-7zM7.500 10.500L14 14l6.500-3.500M14 14v7" />
              </Icon>
            </FitButton>
            <HorizontalPill>
              <HorizontalRange type="range" min={0} max={883} value={move} aria-label="步骤"
                onChange={(e) => setMove(+e.target.value)} />
            </HorizontalPill>
            <MoveBubble><Bubble $tail="left">{move}</Bubble></MoveBubble>
          </BottomBar>
        </Viewport>
      </Workspace>
    </Page>
  );
}
